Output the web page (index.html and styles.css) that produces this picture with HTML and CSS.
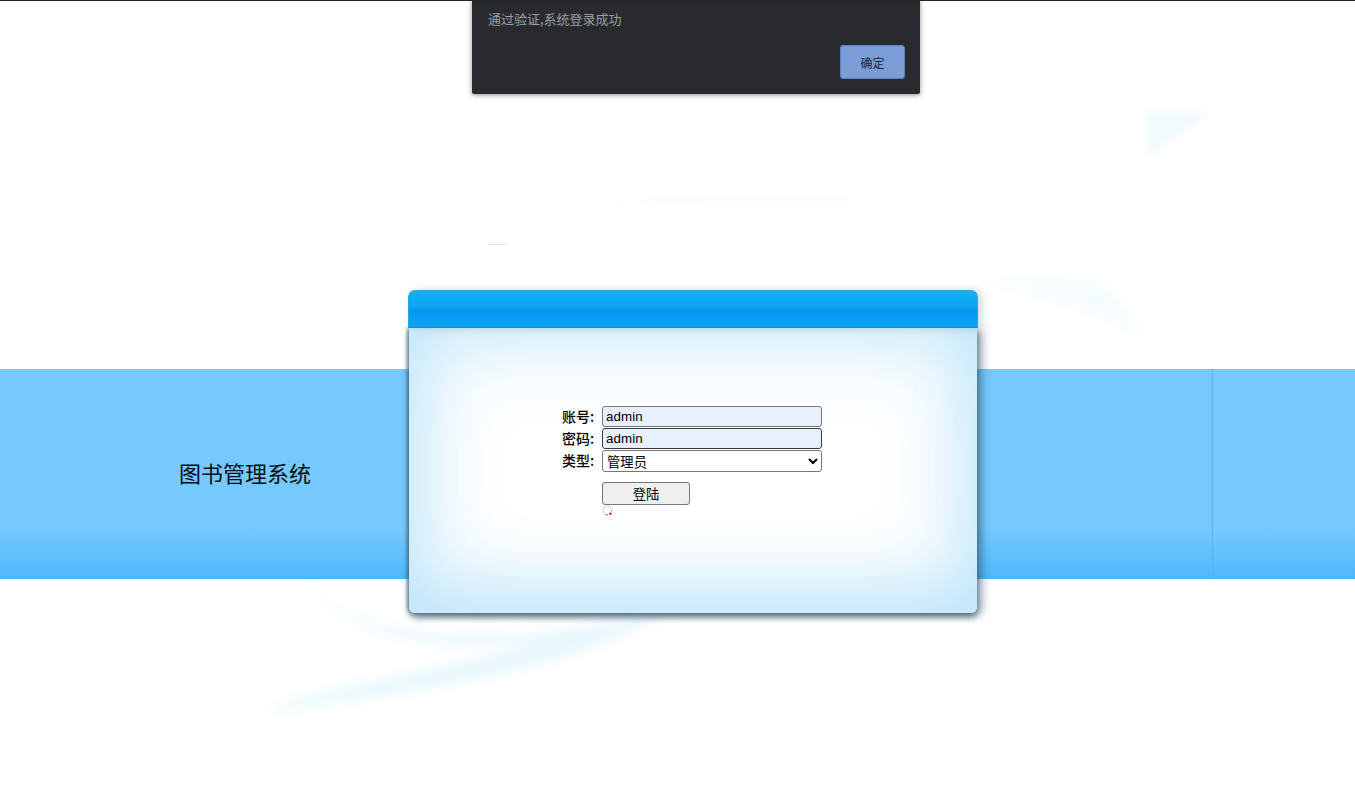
FILE: index.html
```html
<!DOCTYPE html>
<html lang="zh-CN">
<head>
<meta charset="utf-8">
<title>图书管理系统</title>
<link rel="stylesheet" href="styles.css">
</head>
<body>
<div class="page">
  <svg class="decor" width="1355" height="786" viewBox="0 0 1355 786" aria-hidden="true">
    <defs>
      <filter id="soft" x="-20%" y="-50%" width="140%" height="200%"><feGaussianBlur stdDeviation="6"/></filter>
      <filter id="softer" x="-20%" y="-50%" width="140%" height="200%"><feGaussianBlur stdDeviation="3"/></filter>
    </defs>
    <g filter="url(#soft)">
      <path class="sw-a" d="M305 585 C340 625 430 640 520 634 C570 630 620 622 665 612 C610 650 520 672 430 688 C370 698 310 708 262 710 C340 684 450 668 540 642 C450 652 350 640 305 585 Z"/>
      <path class="sw-b" d="M975 281 L1105 283 L1148 342 C1110 315 1050 295 975 281 Z"/>
      <path class="sw-c" d="M900 108 L1210 113 L1147 125 L1147 112 C1060 108 980 110 900 108 Z"/>
    </g>
    <g filter="url(#softer)">
      <path class="sw-e" d="M1147 113 L1210 113 L1147 158 Z"/>
      <path class="sw-d" d="M500 208 L640 198 L850 195 L845 205 L750 208 L640 202 Z"/>
    </g>
    <rect class="dash" x="488" y="244" width="20" height="1"/>
  </svg>

  <section class="band">
    <h1 class="title">图书管理系统</h1>
  </section>

  <main class="panel">
    <div class="panel-head"></div>
    <form class="login">
      <label class="lbl" for="u">账号:</label>
      <input class="field filled" id="u" type="text" value="admin">
      <label class="lbl" for="p">密码:</label>
      <input class="field filled active" id="p" type="text" value="admin">
      <label class="lbl" for="t">类型:</label>
      <select class="field pick" id="t"><option>管理员</option></select>
      <button class="submit" type="button">登陆</button>
      <svg class="spin" width="12" height="12" viewBox="0 0 12 12" aria-hidden="true">
        <circle class="spin-ring" cx="5.5" cy="5.5" r="4.3"/>
        <circle class="spin-dot" cx="8.5" cy="8.8" r="1.2"/>
        <circle class="spin-dot2" cx="5" cy="9.8" r="1.1"/>
      </svg>
    </form>
  </main>

  <div class="dialog" role="alertdialog">
    <p class="msg">通过验证,系统登录成功</p>
    <div class="actions"><button class="ok" type="button">确定</button></div>
  </div>
</div>
</body>
</html>
```

FILE: styles.css
```css
* { box-sizing: border-box; }
html, body { margin: 0; padding: 0; background: #fff; }
.page {
  position: relative;
  height: 786px;
  overflow: hidden;
  border-top: 1px solid #222;
  padding-top: 368px;
  font-family: "Liberation Sans", "Noto Sans CJK SC", sans-serif;
}
.decor { position: absolute; left: 0; top: -1px; }
.sw-a { fill: #e9f8fd; }
.sw-b { fill: #f5fcfe; }
.sw-c { fill: #fafdfe; }
.sw-d { fill: #fbfdfd; }
.sw-e { fill: #f1fafd; }
.dash { fill: #e8e8e8; }

.band {
  position: relative;
  height: 210px;
  padding: 0 0 4px 179px;
  display: flex;
  align-items: center;
  background: linear-gradient(180deg, #75c9fd 0, #75c9fd 76%, #4db7fb 100%);
}
.band::after {
  content: "";
  position: absolute;
  left: 1212px;
  top: 0;
  bottom: 0;
  width: 1px;
  background: #5ab0e6;
}
.title {
  margin: 0;
  font-size: 22px;
  font-weight: 400;
  color: #050d12;
  font-family: "Noto Sans CJK SC", sans-serif;
  line-height: 30px;
}

.panel {
  position: absolute;
  left: 408px;
  top: 289px;
  width: 570px;
  height: 323px;
}
.panel-head {
  position: relative;
  height: 38px;
  border: 1px solid #2da6d8;
  border-bottom: 1px solid #1787bd;
  border-radius: 7px 7px 0 0;
  background: linear-gradient(180deg, #14b1f4 0, #0ca5f0 42%, #0795ee 52%, #09a6f3 100%);
  box-shadow: 4px 0 10px rgba(60, 90, 110, .22);
}
.login {
  height: 285px;
  margin: 0 1px;
  padding: 78px 0 0 153px;
  border-radius: 0 0 6px 6px;
  background: #fff;
  box-shadow:
    inset 0 -20px 60px rgba(190, 229, 249, .8),
    inset 0 0 100px rgba(190, 230, 250, .95),
    0 4px 6px rgba(60, 90, 110, .75),
    5px 2px 10px rgba(40, 70, 95, .45),
    -2px 0 3px rgba(60, 90, 110, .5);
  display: grid;
  grid-template-columns: 32px 220px;
  grid-auto-rows: 22px;
  column-gap: 8px;
  align-content: start;
  align-items: center;
}
.lbl {
  font-size: 14px;
  line-height: 20px;
  align-self: start;
  white-space: nowrap;
  color: #000;
  font-family: "Noto Sans CJK SC", sans-serif;
  font-weight: 500;
}
.field {
  width: 220px;
  height: 22px;
  margin: 0;
  border: 1px solid #767676;
  border-radius: 3px;
  font-size: 13.33px;
  font-family: "Liberation Sans", "Noto Sans CJK SC", sans-serif;
  color: #000;
  padding: 0 3px;
}
.filled { background: #e8f0fe; height: 21px; align-self: start; letter-spacing: .1px; }
.active { border-color: #3a3a3a; }
.pick { background: #fff; font-family: "Noto Sans CJK SC", sans-serif; font-size: 13.33px; padding: 0; align-self: start; }
.submit {
  grid-column: 2;
  margin-top: 10px;
  width: 88px;
  height: 23px;
  padding: 0;
  border: 1px solid #767676;
  border-radius: 3px;
  background: #efefef;
  color: #000;
  font-size: 13.33px;
  font-family: "Noto Sans CJK SC", sans-serif;
  align-self: start;
}
.spin { grid-column: 2; margin-top: 11px; align-self: start; }
.spin-ring { fill: none; stroke: #c4c4c4; stroke-width: 1.3; stroke-dasharray: 1.6 1.2; }
.spin-dot { fill: #d8202a; }
.spin-dot2 { fill: #ee8a90; }

.dialog {
  position: absolute;
  left: 472px;
  top: -1px;
  width: 448px;
  height: 94px;
  padding: 0 16px;
  background: #292a2d;
  border-radius: 0 0 2px 2px;
  box-shadow: 0 1px 5px rgba(0, 0, 0, .45);
  display: flex;
  flex-direction: column;
}
.msg {
  margin: 11px 0 0;
  font-size: 13px;
  line-height: 16px;
  color: #9aa0a6;
  font-family: "Noto Sans CJK SC", sans-serif;
}
.actions { display: flex; justify-content: flex-end; margin: 18px -1px 0 0; }
.ok {
  width: 65px;
  height: 34px;
  padding: 0;
  border: 1px solid #5f7fb8;
  border-radius: 3px;
  background: #7b9ed9;
  color: #1b2433;
  font-size: 12px;
  font-family: "Noto Sans CJK SC", sans-serif;
}
```
